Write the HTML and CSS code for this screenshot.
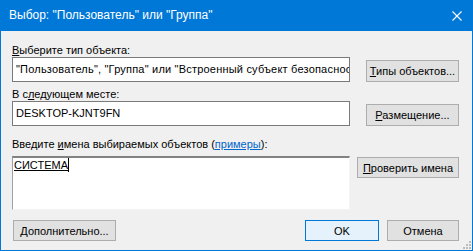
FILE: index.html
```html
<!DOCTYPE html>
<html>

<head>
  <title>Выбор: "Пользователь" или "Группа"</title>
  <link rel="stylesheet" href="styles.css">
</head>

<body>
  <div class="window">
    <div class="titlebar">
      <span class="title">Выбор: "Пользователь" или "Группа"</span>
      <svg class="close" width="10" height="10" viewBox="0 0 10 10">
        <path d="M0.5 0.5 L9.5 9.5 M9.5 0.5 L0.5 9.5" stroke="#fff" stroke-width="1.1" fill="none"/>
      </svg>
    </div>

    <div class="content">
      <div class="label label-first"><u>В</u>ыберите тип объекта:</div>
      <div class="row">
        <div class="field field-wide">"Пользователь", "Группа" или "Встроенный субъект безопасности"</div>
        <button type="button" class="btn"><u>Т</u>ипы объектов...</button>
      </div>

      <div class="label">В с<u>л</u>едующем месте:</div>
      <div class="row">
        <div class="field">DESKTOP-KJNT9FN</div>
        <button type="button" class="btn"><u>Р</u>азмещение...</button>
      </div>

      <div class="label label-names">Введите <u>и</u>мена выбираемых объектов (<a href="#" class="link">примеры</a>):</div>
      <div class="row row-names">
        <div class="names"><span class="resolved">СИСТЕМА</span><span class="caret"></span></div>
        <button type="button" class="btn btn-check"><u>П</u>роверить имена</button>
      </div>

      <div class="footer">
        <button type="button" class="btn btn-more"><u>Д</u>ополнительно...</button>
        <div class="spacer"></div>
        <button type="button" class="btn btn-ok">OK</button>
        <button type="button" class="btn btn-cancel">Отмена</button>
      </div>
    </div>

    <svg class="grip" width="9" height="9" viewBox="0 0 9 9">
      <rect x="7" y="1" width="2" height="2" fill="#bcbcbc"/>
      <rect x="4" y="4" width="2" height="2" fill="#bcbcbc"/>
      <rect x="7" y="4" width="2" height="2" fill="#bcbcbc"/>
      <rect x="1" y="7" width="2" height="2" fill="#bcbcbc"/>
      <rect x="4" y="7" width="2" height="2" fill="#bcbcbc"/>
      <rect x="7" y="7" width="2" height="2" fill="#bcbcbc"/>
    </svg>
  </div>
</body>

</html>
```

FILE: styles.css
```css
body {
  margin: 0;
  padding: 0;
  font-family: 'Liberation Sans', Arial, sans-serif;
  font-size: 11px;
  color: #000;
  background-color: #f0f0f0;
}

.window {
  position: relative;
  width: 473px;
  height: 251px;
  box-sizing: border-box;
  border: 1px solid #0078d7;
  border-top: none;
  background-color: #f0f0f0;
  display: flex;
  flex-direction: column;
}

.titlebar {
  height: 31px;
  margin: 0 -1px;
  background-color: #0078d7;
  color: #fff;
  display: flex;
  align-items: center;
  padding: 0 12px 0 9px;
  font-size: 12px;
  flex-shrink: 0;
}

.title {
  flex: 1;
  margin-top: -1px;
}

.close {
  display: block;
  margin-right: -1px;
}

.content {
  flex: 1;
  padding: 0 13px 0 11px;
  display: flex;
  flex-direction: column;
}

.label {
  line-height: 14px;
  height: 14px;
  margin-top: 5px;
  white-space: nowrap;
}

.label-first {
  margin-top: 12px;
}

.label-names {
  margin-top: 11px;
}

.row {
  display: flex;
  align-items: flex-end;
}

.field {
  width: 338px;
  height: 25px;
  box-sizing: border-box;
  border: 1px solid #7a7a7a;
  background-color: #fff;
  padding: 0 3px;
  line-height: 23px;
  white-space: nowrap;
  overflow: hidden;
}

/* the object type list is wider than the box and gets clipped */
.field-wide {
  letter-spacing: 0.2px;
}

.btn {
  font-family: inherit;
  font-size: 11px;
  color: #000;
  background-color: #e1e1e1;
  border: 1px solid #adadad;
  height: 22px;
  padding: 0;
  margin: 0 0 0 auto;
  width: 93px;
  box-sizing: border-box;
  line-height: 20px;
  white-space: nowrap;
}

.row-names {
  align-items: flex-start;
  margin-top: 5px;
}

.names {
  width: 338px;
  height: 54px;
  box-sizing: border-box;
  background-color: #fff;
  border-style: solid;
  border-width: 2px 1px 1px 1px;
  border-color: #828282 #f4f4f4 #f4f4f4 #a0a0a0;
  padding: 0 1px;
  line-height: 14px;
  display: flex;
  align-items: flex-start;
}

.resolved {
  text-decoration: underline;
}

.caret {
  width: 1px;
  height: 14px;
  background-color: #000;
}

.btn-check {
  width: 102px;
  height: 21px;
  margin-top: 1px;
}

.link {
  color: #0066cc;
}

.footer {
  display: flex;
  margin-top: 10px;
  gap: 8px;
}

.footer .btn {
  margin: 0;
  height: 21px;
}

.btn-more {
  width: 103px;
  margin-left: 1px !important;
}

.spacer {
  flex: 1;
}

.btn-ok {
  width: 74px;
  border-color: #0078d7;
  background-color: #e5f1fb;
}

.btn-cancel {
  width: 72px;
}

.grip {
  position: absolute;
  right: 1px;
  bottom: 1px;
}
```
